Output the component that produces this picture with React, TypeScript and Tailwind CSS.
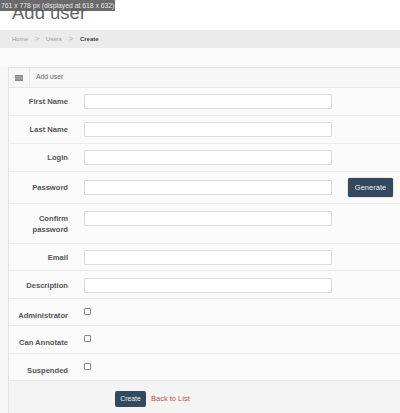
import React from "react";

const font = { fontFamily: '"Liberation Sans", Arial, sans-serif' };

function Row({
  label,
  h,
  children,
}: {
  label: React.ReactNode;
  h: string;
  children: React.ReactNode;
}) {
  return (
    <div className={`flex border-b border-[#ececec] ${h}`}>
      <div className="flex w-[59px] shrink-0 items-center justify-end text-right text-[7.6px] font-bold text-[#555] h-[15px]">
        {label}
      </div>
      <div className="flex-1 pl-[16px]">{children}</div>
    </div>
  );
}

function Input() {
  return <div className="h-[15px] w-[248px] border border-[#dcdcdc] bg-white rounded-[1px]" />;
}

function Check() {
  return <div className="mt-[9px] h-[7px] w-[7px] border border-[#888] bg-white rounded-[1px]" />;
}

export default function App() {
  return (
    <div className="relative h-[413px] w-[400px] overflow-hidden bg-[#f7f7f7]" style={font}>
      <div className="absolute left-0 top-0 z-10 bg-[#5a5a5a]/90 px-[1px] text-[6.8px] leading-[11px] text-[#e6e6e6]">
        761 x 778 px (displayed at 618 x 632)
      </div>
      <div className="h-[30px] bg-white pl-[12px] pt-[3px] text-[18.5px] leading-[20px] text-[#666]">
        Add user
      </div>
      <div className="flex h-[18px] items-center gap-[7px] bg-[#ebebeb] pl-[12px] text-[6px] text-[#999]">
        <span>Home</span>
        <span className="text-[7px] text-[#aaa]">&gt;</span>
        <span>Users</span>
        <span className="text-[7px] text-[#aaa]">&gt;</span>
        <span className="font-bold text-[#444]">Create</span>
      </div>
      <div className="h-[19px] bg-[#f9f9f9]" />
      <div className="ml-[8px] border-l border-t border-[#e3e3e3] bg-[#fbfbfb]">
        <div className="flex h-[20px] items-center border-b border-[#e6e6e6] bg-[#f7f7f7]">
          <div className="flex h-full w-[21px] items-center justify-center border-r border-[#e6e6e6]">
            <svg width="8" height="6" viewBox="0 0 8 6">
              <rect x="0" y="0" width="8" height="6" fill="#8a8a8a" />
              <rect x="0" y="1.6" width="8" height="0.6" fill="#c8c8c8" />
              <rect x="0" y="3.6" width="8" height="0.6" fill="#c8c8c8" />
            </svg>
          </div>
          <span className="pl-[6px] text-[6.8px] text-[#666]">Add user</span>
        </div>
        <Row label="First Name" h="h-[28px] items-start pt-[6px]">
          <Input />
        </Row>
        <Row label="Last Name" h="h-[28px] items-start pt-[6px]">
          <Input />
        </Row>
        <Row label="Login" h="h-[28px] items-start pt-[6px]">
          <Input />
        </Row>
        <div className="flex h-[32px] items-center border-b border-[#ececec]">
          <div className="w-[59px] shrink-0 text-right text-[7.6px] font-bold text-[#555]">Password</div>
          <div className="flex flex-1 items-center pl-[16px]">
            <Input />
            <div className="ml-[16px] flex h-[19px] w-[45px] items-center justify-center rounded-[2px] bg-[#34495e] text-[7.5px] text-[#e8edf2] shadow-[0_0_1px_#1e2b38]">
              Generate
            </div>
          </div>
        </div>
        <div className="flex h-[40px] border-b border-[#ececec]">
          <div className="w-[59px] shrink-0 pt-[9px] text-right text-[7.6px] font-bold leading-[11px] text-[#555]">
            Confirm
            <br />
            password
          </div>
          <div className="flex-1 pl-[16px] pt-[7px]">
            <Input />
          </div>
        </div>
        <Row label="Email" h="h-[27px] items-start pt-[6px]">
          <Input />
        </Row>
        <Row label="Description" h="h-[28px] items-start pt-[7px]">
          <Input />
        </Row>
        <div className="flex h-[27px] border-b border-[#ececec]">
          <div className="w-[59px] shrink-0 pt-[11px] text-right text-[7.6px] font-bold text-[#555]">Administrator</div>
          <div className="flex-1 pl-[16px]">
            <Check />
          </div>
        </div>
        <div className="flex h-[28px] border-b border-[#ececec]">
          <div className="w-[59px] shrink-0 pt-[11px] text-right text-[7.6px] font-bold text-[#555]">Can Annotate</div>
          <div className="flex-1 pl-[16px]">
            <Check />
          </div>
        </div>
        <div className="flex h-[27px] border-b border-[#e6e6e6]">
          <div className="w-[59px] shrink-0 pt-[11px] text-right text-[7.6px] font-bold text-[#555]">Suspended</div>
          <div className="flex-1 pl-[16px]">
            <Check />
          </div>
        </div>
        <div className="flex h-[40px] items-start gap-[5px] bg-[#f4f4f4] pl-[106px] pt-[10px]">
          <div className="flex h-[16px] w-[31px] items-center justify-center rounded-[2px] bg-[#34495e] text-[6.8px] text-[#e8edf2]">
            Create
          </div>
          <span className="pt-[2px] text-[7.5px] text-[#c0504d]">Back to List</span>
        </div>
      </div>
    </div>
  );
}
